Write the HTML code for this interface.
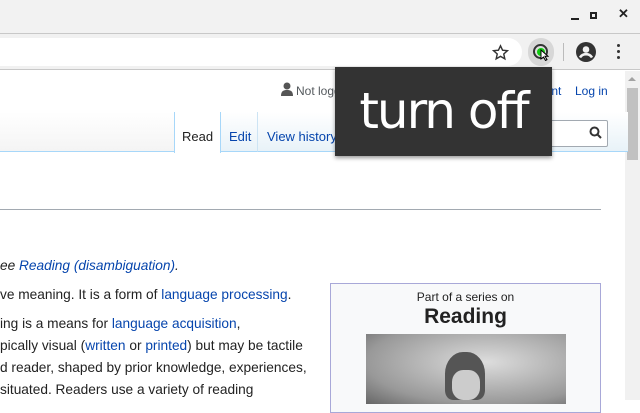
<!DOCTYPE html>
<html><head><meta charset="utf-8"><style>
*{margin:0;padding:0;box-sizing:border-box}
body{width:640px;height:400px;overflow:hidden;position:relative;background:#fff;font-family:"Liberation Sans",sans-serif;color:#222}
.abs{position:absolute}
a{color:#0645ad;text-decoration:none}
.t{position:absolute;left:0;font-size:13.7px;white-space:nowrap;line-height:16px}
</style></head><body>
<div class="abs" style="left:0;top:0;width:640px;height:33px;background:#f2f2f2"></div>
<div class="abs" style="left:0;top:33px;width:640px;height:37px;background:#f1f1f1;border-top:1px solid #c8c8c8;border-bottom:1px solid #c8c8c8"></div>
<div class="abs" style="left:-20px;top:38px;width:542px;height:28px;background:#fff;border-radius:14px"></div>
<!-- window controls -->
<div class="abs" style="left:571px;top:18px;width:8px;height:2px;background:#222"></div>
<div class="abs" style="left:590px;top:12px;width:7px;height:7px;border:2px solid #222"></div>
<div class="abs" style="left:618px;top:6px;font-size:13px;font-weight:bold;color:#222">✕</div>
<!-- star -->
<svg class="abs" style="left:492px;top:44px" width="17" height="17" viewBox="0 0 24 24"><path d="M12 2.5l2.9 6.3 6.8.7-5.1 4.6 1.5 6.8L12 17.4l-6.1 3.5 1.5-6.8L2.3 9.5l6.8-.7z" fill="none" stroke="#333" stroke-width="2"/></svg>
<!-- extension -->
<div class="abs" style="left:528px;top:38px;width:26px;height:28px;border-radius:13px;background:#d7d7d7"></div>
<div class="abs" style="left:533px;top:44px;width:15px;height:15px;border-radius:50%;border:2px solid #333;background:#ddd"></div>
<div class="abs" style="left:537px;top:48px;width:8px;height:8px;border-radius:50%;background:#1c1"></div>
<svg class="abs" style="left:540px;top:49px" width="9" height="12" viewBox="0 0 9 12"><path d="M1 1v9l2.5-2 2 3.5 1.5-.8-2-3.4H8z" fill="#fff" stroke="#000" stroke-width="1"/></svg>
<div class="abs" style="left:563px;top:43px;width:1px;height:18px;background:#bbb"></div>
<svg class="abs" style="left:576px;top:42px" width="20" height="20" viewBox="0 0 20 20"><circle cx="10" cy="10" r="10" fill="#333"/><circle cx="10" cy="7.5" r="3.3" fill="#f1f1f1"/><path d="M4 15.5c1.5-2.5 3.5-3.3 6-3.3s4.5.8 6 3.3" stroke="#f1f1f1" stroke-width="2.6" fill="none"/></svg>
<div class="abs" style="left:617px;top:44px;width:3px;height:3px;background:#333;border-radius:50%;box-shadow:0 6px 0 #333,0 12px 0 #333"></div>
<!-- scrollbar -->
<div class="abs" style="left:625px;top:71px;width:15px;height:329px;background:#f1f1f1"></div>
<div class="abs" style="left:628px;top:77px;width:0;height:0;border-left:4px solid transparent;border-right:4px solid transparent;border-bottom:4px solid #a3a3a3"></div>
<div class="abs" style="left:627px;top:88px;width:11px;height:72px;background:#c1c1c1"></div>
<!-- wiki header -->
<svg class="abs" style="left:281px;top:82px" width="12" height="14" viewBox="0 0 12 14"><circle cx="6" cy="4" r="3.5" fill="#555"/><path d="M0 14c0-5 2.5-6 6-6s6 1 6 6z" fill="#555"/></svg>
<div class="abs" style="left:296px;top:84px;font-size:12px;color:#54595d">Not logged in</div>
<div class="abs" style="left:538px;top:84px;font-size:12px"><a>ount</a></div>
<div class="abs" style="left:575px;top:84px;font-size:12px"><a>Log in</a></div>
<div class="abs" style="left:0;top:112px;width:174px;height:40px;background:linear-gradient(#fff,#f4f4f4);border-bottom:1px solid #a7d7f9"></div>
<div class="abs" style="left:174px;top:112px;width:47px;height:41px;background:#fff;border-left:1px solid #a7d7f9;border-right:1px solid #a7d7f9"></div>
<div class="abs" style="left:182px;top:129px;font-size:13px;color:#222">Read</div>
<div class="abs" style="left:221px;top:112px;width:37px;height:40px;background:linear-gradient(#fff,#e8f2f8);border-bottom:1px solid #a7d7f9;border-right:1px solid #cde4f4"></div>
<div class="abs" style="left:229px;top:129px;font-size:13px"><a>Edit</a></div>
<div class="abs" style="left:258px;top:112px;width:370px;height:40px;background:linear-gradient(#fff,#e8f2f8);border-bottom:1px solid #a7d7f9"></div>
<div class="abs" style="left:267px;top:129px;font-size:13px"><a>View history</a></div>
<div class="abs" style="left:540px;top:120px;width:68px;height:27px;background:#fff;border:1px solid #a2a9b1;border-radius:2px"></div>
<svg class="abs" style="left:589px;top:126px" width="13" height="13" viewBox="0 0 13 13"><circle cx="5.5" cy="5.5" r="4" fill="none" stroke="#333" stroke-width="2"/><path d="M8.5 8.5l3.5 3.5" stroke="#333" stroke-width="2"/></svg>
<div class="abs" style="left:0;top:209px;width:601px;height:1px;background:#a2a9b1"></div>
<!-- body text -->
<div class="t" style="top:258px"><i>ee <a>Reading (disambiguation)</a>.</i></div>
<div class="t" style="top:287px">ve meaning. It is a form of <a>language processing</a>.</div>
<div class="t" style="top:316px">ing is a means for <a>language acquisition</a>,</div>
<div class="t" style="top:338px">pically visual (<a>written</a> or <a>printed</a>) but may be tactile</div>
<div class="t" style="top:360px">d reader, shaped by prior knowledge, experiences,</div>
<div class="t" style="top:382px">situated. Readers use a variety of reading</div>
<!-- infobox -->
<div class="abs" style="left:330px;top:283px;width:271px;height:130px;background:#f8f9fa;border:1px solid #a8a8d8"></div>
<div class="abs" style="left:330px;top:290px;width:271px;text-align:center;font-size:12px">Part of a series on</div>
<div class="abs" style="left:330px;top:305px;width:271px;text-align:center;font-size:21px;font-weight:bold">Reading</div>
<div class="abs" style="left:366px;top:334px;width:200px;height:70px;background:radial-gradient(ellipse at 60% 40%,#ddd,#999 70%,#666)"></div>
<div class="abs" style="left:445px;top:352px;width:40px;height:48px;border-radius:45% 45% 20% 20%;background:#555"></div>
<div class="abs" style="left:452px;top:370px;width:28px;height:30px;border-radius:40%;background:#ccc"></div>
<!-- tooltip -->
<div class="abs" style="left:335px;top:67px;width:217px;height:89px;background:#333;box-shadow:0 2px 4px rgba(0,0,0,.4);color:#fff;font-family:'DejaVu Sans',sans-serif;font-size:50px;text-align:center;line-height:89px;letter-spacing:-2px">turn off</div>
</body></html>
